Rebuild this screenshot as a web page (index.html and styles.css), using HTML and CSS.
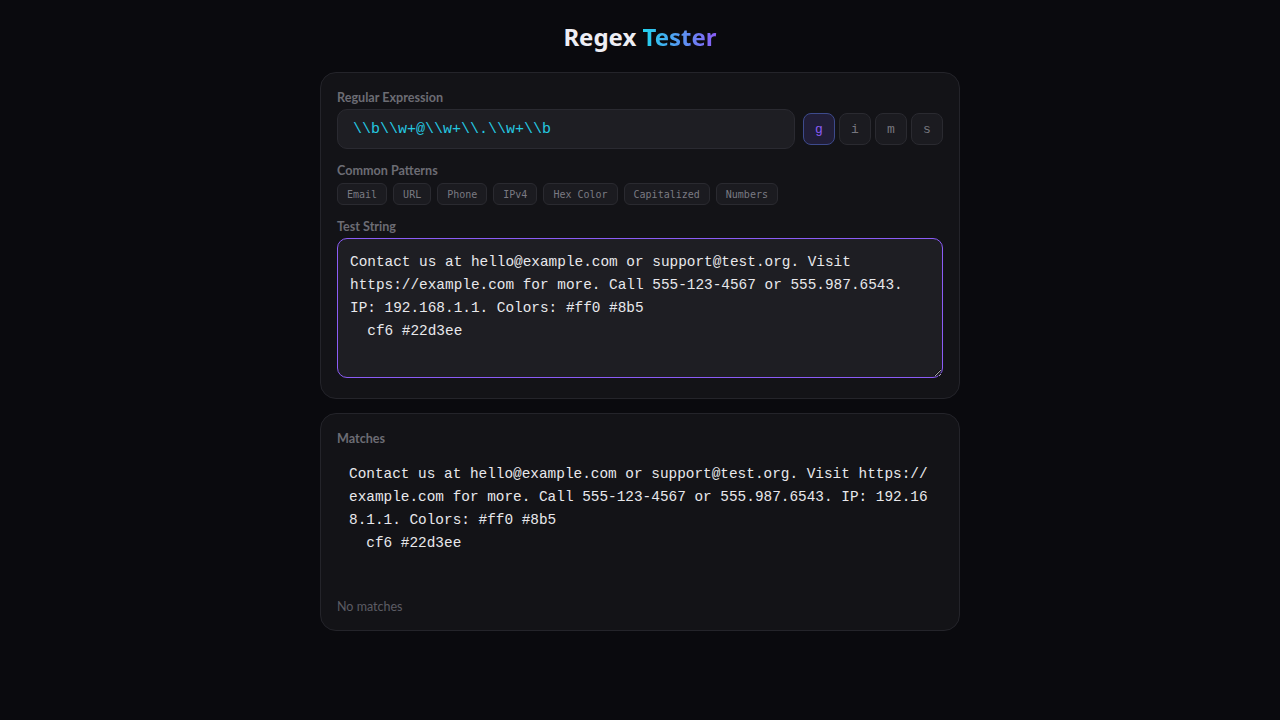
FILE: index.html
```html
<!DOCTYPE html>
<html lang="en">
<head>
  <meta charset="UTF-8">
  <meta name="viewport" content="width=device-width, initial-scale=1.0">
  <title>Regex Tester</title>
  <link rel="stylesheet" href="styles.css">
</head>
<body>
  <div class="app">
    <h1 class="title">Regex <span class="accent">Tester</span></h1>

    <div class="card">
      <div class="label">Regular Expression</div>
      <div class="regex-row">
        <input type="text" class="regex-input" value="\\b\\w+@\\w+\\.\\w+\\b" spellcheck="false">
        <div class="flags">
          <button class="flag active">g</button>
          <button class="flag">i</button>
          <button class="flag">m</button>
          <button class="flag">s</button>
        </div>
      </div>

      <div class="label">Common Patterns</div>
      <div class="patterns">
        <button class="chip">Email</button>
        <button class="chip">URL</button>
        <button class="chip">Phone</button>
        <button class="chip">IPv4</button>
        <button class="chip">Hex Color</button>
        <button class="chip">Capitalized</button>
        <button class="chip">Numbers</button>
      </div>

      <div class="label">Test String</div>
      <textarea class="test-input" spellcheck="false">Contact us at hello@example.com or support@test.org. Visit https://example.com for more. Call 555-123-4567 or 555.987.6543. IP: 192.168.1.1. Colors: #ff0 #8b5
  cf6 #22d3ee</textarea>
    </div>

    <div class="card">
      <div class="label">Matches</div>
      <div class="output">Contact us at hello@example.com or support@test.org. Visit https://example.com for more. Call 555-123-4567 or 555.987.6543. IP: 192.168.1.1. Colors: #ff0 #8b5
  cf6 #22d3ee</div>
      <div class="status">No matches</div>
    </div>
  </div>
</body>
</html>
```

FILE: styles.css
```css
html, body {
  margin: 0;
  padding: 0;
  background-color: #0a0a0e;
  font-family: 'Lato', 'Noto Sans', sans-serif;
  color: #e4e4e7;
}
.app {
  width: 640px;
  margin: 0 auto;
  padding-top: 21px;
}
.title {
  margin: 0 0 20px;
  font-family: 'Noto Sans', sans-serif;
  font-size: 24px;
  line-height: 31px;
  font-weight: 700;
  text-align: center;
  color: #eeeef4;
}
.accent {
  background-image: linear-gradient(90deg, #22d3ee, #8b5cf6);
  -webkit-background-clip: text;
  background-clip: text;
  color: transparent;
}
.card {
  background-color: #131317;
  border: 1px solid #24242a;
  border-radius: 16px;
  padding: 16px;
  margin-bottom: 14px;
}
.label {
  padding-top: 1px;
  font-size: 12.6px;
  line-height: 16px;
  font-weight: 700;
  color: #6c6c74;
  margin-bottom: 3px;
}
.regex-row {
  display: flex;
  align-items: center;
  gap: 8px;
  margin-bottom: 13px;
}
.regex-input {
  flex: 1;
  box-sizing: border-box;
  height: 40px;
  padding: 0 15px;
  background-color: #1e1e23;
  border: 1px solid #2a2a31;
  border-radius: 10px;
  color: #25c8e0;
  font-family: 'Liberation Mono', 'Courier New', monospace;
  font-size: 15px;
  outline: none;
}
.flags {
  display: flex;
  gap: 4px;
}
.flag {
  width: 32px;
  height: 32px;
  padding: 0;
  background-color: #1b1b20;
  border: 1px solid #2a2a30;
  border-radius: 8px;
  color: #76767e;
  font-family: 'Liberation Mono', 'Courier New', monospace;
  font-size: 13px;
  cursor: pointer;
}
.flag.active {
  background-color: #211e38;
  border-color: #3d4a8c;
  color: #8b5cf6;
}
.patterns {
  display: flex;
  flex-wrap: wrap;
  gap: 6px;
  margin-top: 4px;
  margin-bottom: 13px;
}
.chip {
  height: 22px;
  padding: 0 9px;
  background-color: #1b1b20;
  border: 1px solid #2a2a30;
  border-radius: 6px;
  color: #7a7a82;
  font-family: 'DejaVu Sans Mono', monospace;
  font-size: 10px;
  cursor: pointer;
}
.test-input {
  display: block;
  box-sizing: border-box;
  width: 100%;
  height: 140px;
  margin-bottom: 4px;
  padding: 12px;
  background-color: #1e1e23;
  border: 1px solid #8b5cf6;
  border-radius: 10px;
  color: #e8e8ec;
  font-family: 'Liberation Mono', 'Courier New', monospace;
  font-size: 14.4px;
  line-height: 23px;
  resize: vertical;
  outline: none;
}
.output {
  min-height: 112px;
  padding: 12px;
  margin-top: 4px;
  margin-bottom: 12px;
  font-family: 'Liberation Mono', 'Courier New', monospace;
  font-size: 14.4px;
  line-height: 23px;
  color: #e8e8ec;
  white-space: pre-wrap;
  word-break: break-all;
}
.status {
  font-size: 12.5px;
  line-height: 15px;
  color: #5c5c64;
}
```
